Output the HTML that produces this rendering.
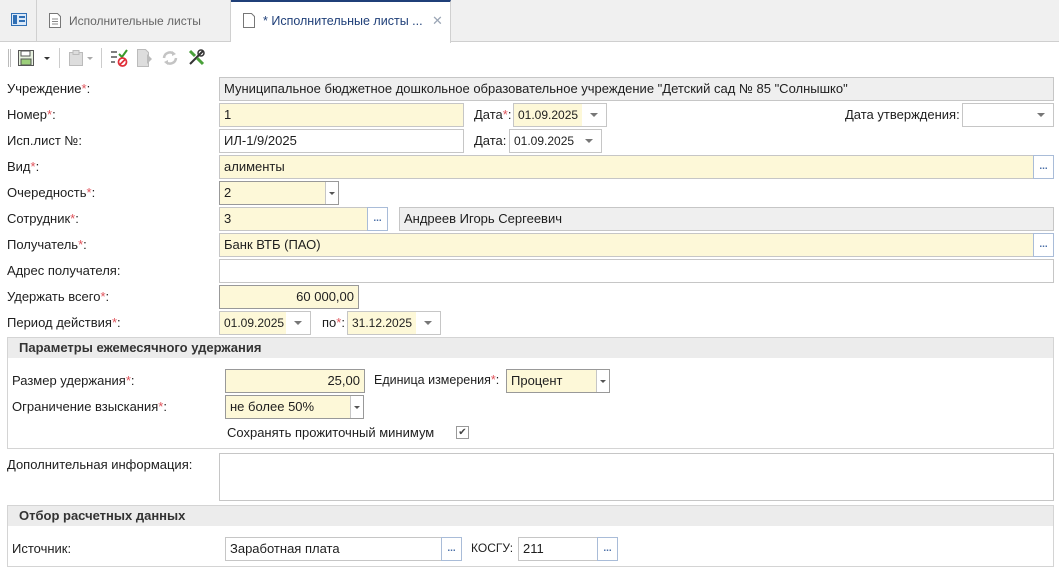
<!DOCTYPE html>
<html><head><meta charset="utf-8"><style>
*{box-sizing:border-box;margin:0;padding:0}
body{width:1059px;height:571px;overflow:hidden;background:#fff;font-family:"Liberation Sans","DejaVu Sans",sans-serif;font-size:13px;color:#1e1e1e;position:relative}
.a{position:absolute}
.l{position:absolute;line-height:15px;white-space:nowrap}
.r{color:#e0525a}
.f{position:absolute;border:1px solid #c6c6c6;background:#fff;height:24px;line-height:22px;padding-left:4px;white-space:nowrap;overflow:hidden}
.y{background:#fdf8d8}
.g{background:#efefef}
.d{font-size:12px}
.btn{position:absolute;border:1px solid #a9bcd8;background:#fff;height:24px;width:21px;text-align:center;line-height:22px;color:#4a6fa8;font-weight:bold;font-size:10px}
.arr{position:absolute;right:0;top:0;bottom:0;width:13px;background:#fff;border-left:1px solid #c6c6c6}
.arr:after{content:"";position:absolute;left:3px;top:10px;border-left:3px solid transparent;border-right:3px solid transparent;border-top:3px solid #555}
.dt{position:absolute;right:0;top:0;bottom:0;width:24px;background:#fff}
.dt:after{content:"";position:absolute;left:8px;top:9px;border-left:4px solid transparent;border-right:4px solid transparent;border-top:4px solid #777}
.hd{position:absolute;background:#ececec;font-weight:bold;padding-left:11px;line-height:20px;color:#333}
</style></head><body>
<div class="a" style="left:0;top:0;width:1059px;height:42px;background:#f0f0f0;border-bottom:1px solid #cfcfcf"></div>
<div class="a" style="left:0;top:0;width:37px;height:42px;border-right:1px solid #d0d0d0"></div>
<svg class="a" style="left:11px;top:13px" width="16" height="13"><rect x="0.5" y="0.5" width="15" height="12" fill="#dbe9f8" stroke="#2f6fb5"/><rect x="2" y="2" width="4" height="9" fill="#2f6fb5"/><rect x="8" y="3" width="6" height="2" fill="#2f6fb5"/><rect x="8" y="7" width="6" height="2" fill="#2f6fb5"/></svg>
<div class="a" style="left:37px;top:0;width:194px;height:42px;border-right:1px solid #d0d0d0"></div>
<svg class="a" style="left:49px;top:13px" width="12" height="15"><path d="M0.5 0.5h8l3 3v11h-11z" fill="#fff" stroke="#777"/><path d="M3 6h6M3 8.5h6M3 11h6" stroke="#888"/></svg>
<div class="l" style="left:69px;top:14px;color:#666;font-size:12px">Исполнительные листы</div>
<div class="a" style="left:231px;top:0;width:220px;height:43px;background:#fff;border-top:2px solid #1f3f78;border-right:1px solid #d0d0d0"></div>
<svg class="a" style="left:243px;top:13px" width="12" height="15"><path d="M0.5 0.5h8l3 3v11h-11z" fill="#fff" stroke="#777"/></svg>
<div class="l" style="left:263px;top:14px;color:#1f3f78;font-size:12.5px">* Исполнительные листы ...</div>
<div class="l" style="left:432px;top:13px;color:#9aa5b5;font-size:13px;font-weight:bold">✕</div>
<div class="a" style="left:8px;top:49px;width:3px;height:18px;border-left:1px solid #bbb;border-right:1px solid #bbb"></div>
<svg class="a" style="left:18px;top:50px" width="16" height="16"><rect x="0.5" y="0.5" width="15" height="15" fill="#e8f2e0" stroke="#555"/><rect x="3" y="1" width="9" height="5" fill="#fff" stroke="#555"/><rect x="3" y="9" width="10" height="6" fill="#9ccf7a" stroke="#555"/></svg>
<div class="a" style="left:44px;top:57px;border-left:3px solid transparent;border-right:3px solid transparent;border-top:3px solid #333"></div>
<div class="a" style="left:59px;top:48px;width:1px;height:20px;background:#ccc"></div>
<svg class="a" style="left:69px;top:50px" width="14" height="16"><rect x="0.5" y="2.5" width="13" height="13" fill="#ddd" stroke="#bbb"/><rect x="4" y="0.5" width="6" height="4" fill="#ddd" stroke="#bbb"/></svg>
<div class="a" style="left:87px;top:57px;border-left:3px solid transparent;border-right:3px solid transparent;border-top:3px solid #aaa"></div>
<div class="a" style="left:101px;top:48px;width:1px;height:20px;background:#ccc"></div>
<svg class="a" style="left:110px;top:49px" width="18" height="18"><path d="M1 3h6M1 8h6M1 13h4" stroke="#555" stroke-width="1.5"/><path d="M9 5l3 3 5-7" stroke="#3a9a2a" stroke-width="2" fill="none"/><circle cx="12.5" cy="13" r="4" fill="none" stroke="#e0303a" stroke-width="1.8"/><path d="M10 15.5l5-5" stroke="#e0303a" stroke-width="1.8"/></svg>
<svg class="a" style="left:137px;top:49px" width="16" height="18"><path d="M0.5 0.5h8l3 3v14h-11z" fill="#ddd" stroke="#bbb"/><path d="M10 5l5 5-5 5z" fill="#bbb"/></svg>
<svg class="a" style="left:162px;top:50px" width="16" height="16"><path d="M2 8a6 6 0 0 1 10-4M14 8a6 6 0 0 1-10 4" stroke="#c4c4c4" stroke-width="2.5" fill="none"/><path d="M10 1l4 3-4 2zM6 15l-4-3 4-2z" fill="#c4c4c4"/></svg>
<svg class="a" style="left:188px;top:49px" width="17" height="17"><path d="M2 15L15 2" stroke="#333" stroke-width="2"/><path d="M2 2l5 5M9 9l6 6" stroke="#4aa03a" stroke-width="3"/><circle cx="13" cy="4" r="3" fill="none" stroke="#333" stroke-width="1.5"/></svg>

<div class="l" style="left:7px;top:81px">Учреждение<span class="r">*</span>:</div>
<div class="f g" style="left:219px;top:77px;width:835px">Муниципальное бюджетное дошкольное образовательное учреждение "Детский сад № 85 "Солнышко"</div>

<div class="l" style="left:7px;top:107px">Номер<span class="r">*</span>:</div>
<div class="f y" style="left:219px;top:103px;width:245px">1</div>
<div class="l" style="left:474px;top:107px">Дата<span class="r">*</span>:</div>
<div class="f y d" style="left:513px;top:103px;width:94px">01.09.2025<div class="dt"></div></div>
<div class="l" style="left:845px;top:107px">Дата утверждения:</div>
<div class="f" style="left:962px;top:103px;width:92px"><div class="dt"></div></div>

<div class="l" style="left:7px;top:133px">Исп.лист №:</div>
<div class="f" style="left:219px;top:129px;width:245px">ИЛ-1/9/2025</div>
<div class="l" style="left:474px;top:133px">Дата:</div>
<div class="f d" style="left:509px;top:129px;width:93px">01.09.2025<div class="dt"></div></div>

<div class="l" style="left:7px;top:159px">Вид<span class="r">*</span>:</div>
<div class="f y" style="left:219px;top:155px;width:815px">алименты</div>
<div class="btn" style="left:1033px;top:155px">...</div>

<div class="l" style="left:7px;top:185px">Очередность<span class="r">*</span>:</div>
<div class="f y" style="left:219px;top:181px;width:120px;border-color:#999">2<div class="arr"></div></div>

<div class="l" style="left:7px;top:211px">Сотрудник<span class="r">*</span>:</div>
<div class="f y" style="left:219px;top:207px;width:149px">3</div>
<div class="btn" style="left:367px;top:207px">...</div>
<div class="f g" style="left:399px;top:207px;width:655px">Андреев Игорь Сергеевич</div>

<div class="l" style="left:7px;top:237px">Получатель<span class="r">*</span>:</div>
<div class="f y" style="left:219px;top:233px;width:815px">Банк ВТБ (ПАО)</div>
<div class="btn" style="left:1033px;top:233px">...</div>

<div class="l" style="left:7px;top:263px">Адрес получателя:</div>
<div class="f" style="left:219px;top:259px;width:835px"></div>

<div class="l" style="left:7px;top:289px">Удержать всего<span class="r">*</span>:</div>
<div class="f y" style="left:219px;top:285px;width:140px;text-align:right;padding-right:4px;border-color:#999">60 000,00</div>

<div class="l" style="left:7px;top:315px">Период действия<span class="r">*</span>:</div>
<div class="f y d" style="left:219px;top:311px;width:92px">01.09.2025<div class="dt"></div></div>
<div class="l" style="left:322px;top:315px">по<span class="r">*</span>:</div>
<div class="f y d" style="left:347px;top:311px;width:94px">31.12.2025<div class="dt"></div></div>

<div class="a" style="left:7px;top:337px;width:1047px;height:112px;border:1px solid #d4d4d4"></div>
<div class="hd" style="left:8px;top:338px;width:1045px">Параметры ежемесячного удержания</div>
<div class="l" style="left:12px;top:373px">Размер удержания<span class="r">*</span>:</div>
<div class="f y" style="left:225px;top:369px;width:140px;text-align:right;padding-right:4px;border-color:#999">25,00</div>
<div class="l" style="left:374px;top:373px;font-size:12.5px">Единица измерения<span class="r">*</span>:</div>
<div class="f y" style="left:506px;top:369px;width:104px;border-color:#999">Процент<div class="arr"></div></div>
<div class="l" style="left:12px;top:399px">Ограничение взыскания<span class="r">*</span>:</div>
<div class="f y" style="left:225px;top:395px;width:139px;border-color:#999">не более 50%<div class="arr"></div></div>
<div class="l" style="left:227px;top:425px">Сохранять прожиточный минимум</div>
<div class="a" style="left:456px;top:426px;width:13px;height:13px;border:1px solid #999;font-size:10px;line-height:11px;text-align:center;color:#444">✔</div>

<div class="l" style="left:7px;top:457px">Дополнительная информация:</div>
<div class="f" style="left:219px;top:453px;width:835px;height:48px"></div>

<div class="a" style="left:7px;top:505px;width:1047px;height:62px;border:1px solid #d4d4d4"></div>
<div class="hd" style="left:8px;top:506px;width:1045px">Отбор расчетных данных</div>
<div class="l" style="left:12px;top:541px">Источник:</div>
<div class="f" style="left:225px;top:537px;width:217px">Заработная плата</div>
<div class="btn" style="left:441px;top:537px">...</div>
<div class="l" style="left:471px;top:541px;font-size:12px">КОСГУ:</div>
<div class="f" style="left:518px;top:537px;width:80px">211</div>
<div class="btn" style="left:597px;top:537px">...</div>
</body></html>
